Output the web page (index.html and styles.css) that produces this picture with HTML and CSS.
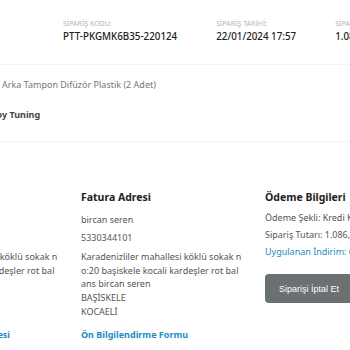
FILE: index.html
```html
<!DOCTYPE html>
<html lang="tr">
<head>
    <meta charset="UTF-8">
    <meta name="viewport" content="width=device-width, initial-scale=1.0">
    <title>Sipariş Detayı</title>
    <link rel="stylesheet" href="styles.css">
</head>
<body>
    <div class="order-page">
        <div class="order-head">
            <div class="head-item">
                <span class="head-label">SİPARİŞ KODU:</span>
                <span class="head-value">PTT-PKGMK6B35-220124</span>
            </div>
            <div class="head-item">
                <span class="head-label">SİPARİŞ TARİHİ:</span>
                <span class="head-value">22/01/2024 17:57</span>
            </div>
            <div class="head-item">
                <span class="head-label">SİPARİŞ TUTARI:</span>
                <span class="head-value">1.086,00 TL</span>
            </div>
        </div>

        <div class="order-item">
            <p class="item-name">Arka Tampon Difüzör Plastik (2 Adet)</p>
            <p class="item-seller">Toy Tuning</p>
        </div>

        <div class="order-details">
            <div class="detail-col">
                <h3>Teslimat Adresi</h3>
                <p>bircan seren</p>
                <p>5330344101</p>
                <p class="address">Karadenizliler mahallesi köklü sokak no:20 başiskele kocali kardeşler rot balans bircan seren<br>BAŞİSKELE<br>KOCAELİ</p>
                <a href="#" class="doc-link">Mesafeli Satış Sözleşmesi</a>
            </div>
            <div class="detail-col">
                <h3>Fatura Adresi</h3>
                <p>bircan seren</p>
                <p>5330344101</p>
                <p class="address">Karadenizliler mahallesi köklü sokak no:20 başiskele kocali kardeşler rot balans bircan seren<br>BAŞİSKELE<br>KOCAELİ</p>
                <a href="#" class="doc-link">Ön Bilgilendirme Formu</a>
            </div>
            <div class="detail-col">
                <h3>Ödeme Bilgileri</h3>
                <div class="pay-block">
                    <p class="pay-line">Ödeme Şekli: Kredi Kartı</p>
                    <p class="pay-line">Sipariş Tutarı: 1.086,00 TL</p>
                    <p class="pay-line discount">Uygulanan İndirim: 60,00 TL</p>
                </div>
                <button class="cancel-btn">Siparişi İptal Et</button>
            </div>
        </div>
    </div>
</body>
</html>
```

FILE: styles.css
```css
:root {
    --text-color: #555;
    --title-color: #222;
    --label-color: #b5b5b5;
    --link-color: #1c8cc4;
    --line-color: #f3f3f3;
}

* {
    margin: 0;
    padding: 0;
    box-sizing: border-box;
}

body {
    font-family: 'Noto Sans', Arial, sans-serif;
    background: #fff;
    color: var(--text-color);
    display: flex;
    justify-content: center;
    overflow: hidden;
}

.order-page {
    flex: 0 0 570px;
    padding: 0 7px;
}

/* üst bilgi satırı */
.order-head {
    display: flex;
    gap: 39px;
    padding: 19px 0 21px 166px;
    border-bottom: 1px solid var(--line-color);
}

.head-item {
    display: flex;
    flex-direction: column;
    gap: 1px;
}

.head-label {
    font-size: 7px;
    color: var(--label-color);
    line-height: 10px;
}

.head-value {
    font-size: 9.8px;
    font-weight: 500;
    color: var(--title-color);
    line-height: 13px;
    white-space: nowrap;
}

/* ürün */
.order-item {
    padding: 14px 0 20px 105px;
    border-bottom: 1px solid var(--line-color);
}

.item-name {
    font-size: 9px;
    color: #777;
    line-height: 12px;
}

.item-seller {
    margin-top: 18px;
    margin-left: -10px;
    font-size: 9px;
    font-weight: 700;
    color: #444;
    line-height: 12px;
}

/* adres ve ödeme */
.order-details {
    display: grid;
    grid-template-columns: 162px 162px 162px;
    column-gap: 22px;
    padding-top: 48px;
}

.detail-col h3 {
    font-size: 10.5px;
    font-weight: 700;
    color: var(--title-color);
    line-height: 14px;
    margin-bottom: 7px;
}

.detail-col p {
    font-size: 9px;
    line-height: 18px;
}

.detail-col .address {
    line-height: 13.7px;
    margin-top: 3px;
    word-break: break-all;
}

.doc-link {
    display: block;
    margin-top: 9px;
    font-size: 9px;
    font-weight: 700;
    color: var(--link-color);
    text-decoration: none;
}

.pay-block {
    margin-top: -2px;
}

.detail-col .pay-line {
    white-space: nowrap;
    line-height: 17px;
}

.discount {
    color: var(--link-color);
}

.cancel-btn {
    margin-top: 14px;
    height: 29px;
    padding: 0 22px 0 14px;
    background: #6b7072;
    color: #fff;
    border: none;
    border-radius: 4px;
    font-family: 'Liberation Sans', Arial, sans-serif;
    font-size: 9px;
    cursor: pointer;
}
```
